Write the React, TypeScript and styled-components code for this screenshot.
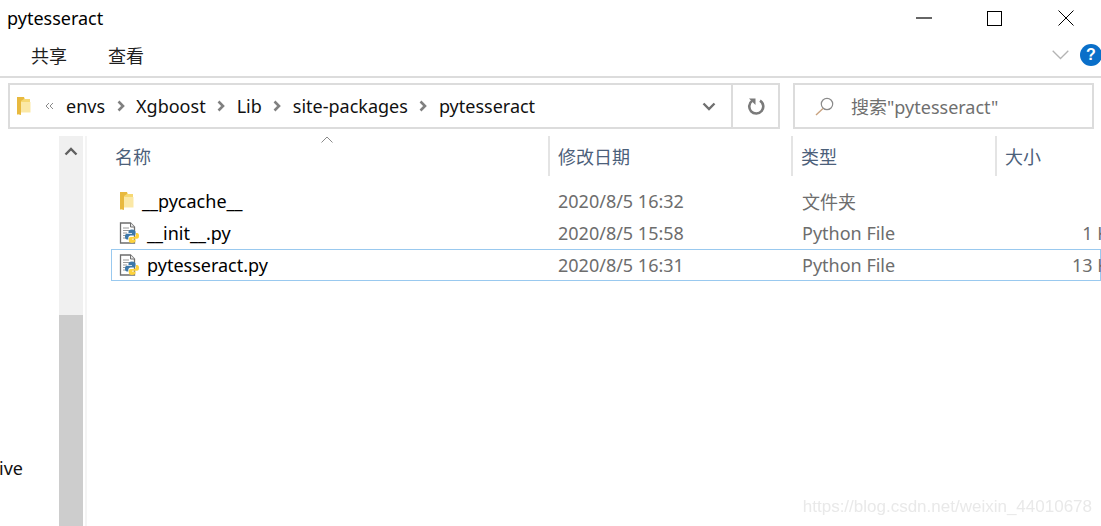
import React from 'react';
import styled, { createGlobalStyle } from 'styled-components';

const GlobalStyle = createGlobalStyle`
  html, body {
    margin: 0;
    height: 100%;
    background: #fff;
    overflow: hidden;
  }
  #root {
    height: 100%;
  }
`;

const UI_FONT = `"Noto Sans", "Noto Sans CJK SC", sans-serif`;

const Window = styled.div`
  position: relative;
  width: 1101px;
  height: 526px;
  display: flex;
  flex-direction: column;
  overflow: hidden;
  background: #fff;
  font-family: ${UI_FONT};
  font-size: 18px;
  color: #000;
`;

const TitleBar = styled.div`
  height: 36px;
  flex: none;
  display: flex;
  align-items: center;
  justify-content: space-between;
  padding-left: 7px;
`;

const Title = styled.div`
  font-size: 18px;
  line-height: 36px;
`;

const WindowButtons = styled.div`
  display: flex;
  align-items: center;
`;

const WindowButton = styled.div`
  width: 71px;
  height: 36px;
  display: flex;
  align-items: center;
  justify-content: center;
`;

const Ribbon = styled.div`
  height: 42px;
  flex: none;
  box-sizing: border-box;
  display: flex;
  align-items: center;
  justify-content: space-between;
  border-bottom: 2px solid #dcdcdc;
  padding: 0 0 2px 31px;
`;

const Tabs = styled.div`
  display: flex;
  gap: 41px;
`;

const Tab = styled.div`
  font-size: 18px;
  color: #1f1f1f;
`;

const RibbonRight = styled.div`
  display: flex;
  align-items: center;
  gap: 11px;
  margin-right: -1px;
`;

const HelpBadge = styled.div`
  width: 22px;
  height: 22px;
  border-radius: 50%;
  background: #0a6fc9;
  color: #fff;
  font-family: "Liberation Sans", sans-serif;
  font-weight: bold;
  font-size: 16px;
  line-height: 22px;
  text-align: center;
`;

const NavRow = styled.div`
  flex: none;
  display: flex;
  gap: 13px;
  padding: 5px 7px 0 8px;
`;

const AddressBar = styled.div`
  width: 772px;
  height: 46px;
  box-sizing: border-box;
  flex: none;
  display: flex;
  align-items: center;
  border: 2px solid #dcdcdc;
  padding-left: 6px;
`;

const Crumbs = styled.div`
  flex: 1;
  display: flex;
  align-items: center;
`;

const Crumb = styled.span`
  font-size: 18px;
  color: #111;
`;

const CrumbSep = styled.span`
  width: 31px;
  display: flex;
  justify-content: center;
`;

const AddressControl = styled.div<{ $w: number; $divider?: boolean }>`
  width: ${(p) => p.$w}px;
  align-self: stretch;
  display: flex;
  align-items: center;
  justify-content: center;
  ${(p) => (p.$divider ? 'border-left: 2px solid #dcdcdc;' : '')}
`;

const SearchBox = styled.div`
  flex: 1;
  height: 46px;
  box-sizing: border-box;
  display: flex;
  align-items: center;
  gap: 17px;
  border: 2px solid #dcdcdc;
  padding-left: 20px;
  font-size: 18px;
  color: #6f6f6f;
`;

const Body = styled.div`
  flex: 1;
  min-height: 0;
  display: flex;
  padding-top: 7px;
`;

const NavPane = styled.div`
  width: 59px;
  flex: none;
  display: flex;
  flex-direction: column;
  justify-content: flex-end;
  padding-bottom: 46px;
  font-size: 18px;
  line-height: 24px;
  overflow: hidden;
`;

const NavLabel = styled.div`
  margin-left: -1px;
  color: #111;
`;

const ScrollBar = styled.div`
  width: 24px;
  flex: none;
  display: flex;
  flex-direction: column;
  background: #f0f0f0;
`;

const ScrollArrow = styled.div`
  height: 30px;
  display: flex;
  align-items: center;
  justify-content: center;
`;

const ScrollTrack = styled.div`
  height: 149px;
  flex: none;
`;

const ScrollThumb = styled.div`
  flex: 1;
  background: #cdcdcd;
`;

const PaneSplit = styled.div`
  width: 2px;
  flex: none;
  margin-left: 2px;
  background: #f4f4f4;
`;

const FileList = styled.div`
  flex: 1;
  min-width: 0;
  position: relative;
  padding-left: 24px;
`;

const SortCaret = styled.div`
  position: absolute;
  left: 234px;
  top: 0;
  line-height: 0;
`;

const ColumnRow = styled.div`
  display: grid;
  grid-template-columns: 437px 243px 204px 1fr;
  height: 40px;
  margin-bottom: 9px;
`;

const ColumnHead = styled.div<{ $line?: boolean }>`
  display: flex;
  align-items: center;
  box-sizing: border-box;
  padding-left: ${(p) => (p.$line ? '8px' : '4px')};
  ${(p) => (p.$line ? 'border-left: 2px solid #e4e4e4;' : '')}
  font-size: 18px;
  color: #4c607a;
`;

const Row = styled.div<{ $selected?: boolean }>`
  display: grid;
  grid-template-columns: 437px 243px 204px 1fr;
  height: 32px;
  box-sizing: border-box;
  align-items: center;
  border: 1px solid ${(p) => (p.$selected ? '#99c9ef' : 'transparent')};
  white-space: nowrap;
`;

const NameCell = styled.div`
  display: flex;
  align-items: center;
  gap: 8px;
  padding-left: 7px;
  color: #000;
`;

const DateCell = styled.div`
  padding-left: 9px;
  color: #6d6d6d;
`;

const TypeCell = styled.div`
  padding-left: 10px;
  color: #6d6d6d;
`;

const SizeCell = styled.div`
  color: #6d6d6d;
  text-align: right;
  overflow: hidden;
  direction: ltr;
  padding-left: 60px;
  margin-right: -20px;
`;

const Watermark = styled.div`
  position: absolute;
  right: 9px;
  bottom: 9px;
  font-family: "Liberation Sans", Arial, sans-serif;
  font-size: 17px;
  line-height: 20px;
  color: #e9e9e9;
  filter: blur(0.3px);
`;

const FolderIcon = ({ size = 20 }: { size?: number }) => (
  <svg width={size * 0.75} height={size} viewBox="0 0 15 20">
    <path d="M1 1h7l1 2h5v13H5l-4 3z" fill="#f6d873" />
    <path d="M1 1h7v2L5 5v14l-4-1z" fill="#e8b93f" />
    <path d="M5 6h9.5v10.500H5z" fill="#fbe8a6" />
  </svg>
);

const PythonFileIcon = () => (
  <svg width="20" height="22" viewBox="0 0 20 22">
    <path d="M1.500 1h10l4 4v16h-14z" fill="#fff" stroke="#6e6e6e" strokeWidth="1.300" />
    <path d="M11.500 1v4h4" fill="#e9e9e9" stroke="#6e6e6e" />
    <path d="M4 6h6M4 8.500h9M4 11h4M4 13.500h4M4 16h4" stroke="#9a9a9a" />
    <path d="M13 7.500c-2.500 0-3.500 1-3.500 2.300v1.200h3.500v.7H8c-1.500 0-2 1.300-2 3 0 1.600.7 2.800 2 2.800h1.300v-1.700c0-1.300 1-2.300 2.300-2.300h3.100c1 0 1.800-.8 1.800-1.800V9.800c0-1.300-1.300-2.300-3.500-2.300z" fill="#3c78aa" />
    <path d="M13 21c2.500 0 3.500-1 3.500-2.300v-1.200H13v-.7h5c1.500 0 2-1.300 2-3 0-1.600-.7-2.800-2-2.800h-1v1.700c0 1.300-1 2.300-2.300 2.300h-3.100c-1 0-1.800.8-1.800 1.800v1.900c0 1.300 1.200 2.300 3.200 2.300z" fill="#fdd23c" />
  </svg>
);

const CrumbArrow = () => (
  <svg width="8" height="12" viewBox="0 0 8 12">
    <path d="M1.500 1.500 6 6l-4.500 4.500" fill="none" stroke="#808080" strokeWidth="2.600" />
  </svg>
);

const crumbs = ['envs', 'Xgboost', 'Lib', 'site-packages', 'pytesseract'];

const files = [
  { name: '__pycache__', date: '2020/8/5 16:32', type: '文件夹', size: '', folder: true },
  { name: '__init__.py', date: '2020/8/5 15:58', type: 'Python File', size: '1 KB' },
  { name: 'pytesseract.py', date: '2020/8/5 16:31', type: 'Python File', size: '13 KB', selected: true },
];

export default function App() {
  return (
    <Window>
      <GlobalStyle />
      <TitleBar>
        <Title>pytesseract</Title>
        <WindowButtons>
          <WindowButton>
            <svg width="16" height="2" viewBox="0 0 16 2"><path d="M0 1h16" stroke="#000" strokeWidth="1.200" /></svg>
          </WindowButton>
          <WindowButton>
            <svg width="15" height="15" viewBox="0 0 15 15"><rect x=".5" y=".5" width="14" height="14" fill="none" stroke="#000" /></svg>
          </WindowButton>
          <WindowButton>
            <svg width="16" height="16" viewBox="0 0 16 16"><path d="M.5.5l15 15M15.500.5l-15 15" stroke="#000" /></svg>
          </WindowButton>
        </WindowButtons>
      </TitleBar>
      <Ribbon>
        <Tabs>
          <Tab>共享</Tab>
          <Tab>查看</Tab>
        </Tabs>
        <RibbonRight>
          <svg width="17" height="10" viewBox="0 0 17 10"><path d="M.7.7 8.500 8.500 16.300.7" fill="none" stroke="#b4b4b4" strokeWidth="1.300" /></svg>
          <HelpBadge>?</HelpBadge>
        </RibbonRight>
      </Ribbon>
      <NavRow>
        <AddressBar>
          <FolderIcon size={20} />
          <Crumbs>
            <svg width="9" height="8" viewBox="0 0 9 8" style={{ margin: '0 12px 0 14px' }}>
              <path d="M4 1 1 4l3 3M8 1 5 4l3 3" fill="none" stroke="#8a8a8a" />
            </svg>
            {crumbs.map((c, i) => (
              <React.Fragment key={c}>
                {i > 0 && <CrumbSep><CrumbArrow /></CrumbSep>}
                <Crumb>{c}</Crumb>
              </React.Fragment>
            ))}
          </Crumbs>
          <AddressControl $w={44}>
            <svg width="14" height="9" viewBox="0 0 14 9"><path d="M1.500 1.500 7 7l5.500-5.500" fill="none" stroke="#707070" strokeWidth="2.400" /></svg>
          </AddressControl>
          <AddressControl $w={45} $divider>
            <svg width="18" height="18" viewBox="0 0 18 18">
              <path d="M5.200 3.800A7 7 0 1 0 13 3.600" fill="none" stroke="#7a7a7a" strokeWidth="2.600" />
              <path d="M2 1.500h6.500V8z" fill="#7a7a7a" />
            </svg>
          </AddressControl>
        </AddressBar>
        <SearchBox>
          <svg width="19" height="19" viewBox="0 0 19 19">
            <circle cx="12" cy="7" r="5.700" fill="none" stroke="#8a8a8a" strokeWidth="1.200" />
            <path d="M8 11.500 1 18" stroke="#c9a27f" strokeWidth="1.400" />
          </svg>
          <span>搜索"pytesseract"</span>
        </SearchBox>
      </NavRow>
      <Body>
        <NavPane>
          <NavLabel>ive</NavLabel>
        </NavPane>
        <ScrollBar>
          <ScrollArrow>
            <svg width="14" height="9" viewBox="0 0 14 9"><path d="M1.500 7.500 7 2l5.500 5.500" fill="none" stroke="#606060" strokeWidth="2.400" /></svg>
          </ScrollArrow>
          <ScrollTrack />
          <ScrollThumb />
        </ScrollBar>
        <PaneSplit />
        <FileList>
          <SortCaret>
            <svg width="12" height="7" viewBox="0 0 12 7"><path d="M.5 6.500 6 1l5.500 5.500" fill="none" stroke="#8a8a8a" /></svg>
          </SortCaret>
          <ColumnRow>
            <ColumnHead>名称</ColumnHead>
            <ColumnHead $line>修改日期</ColumnHead>
            <ColumnHead $line>类型</ColumnHead>
            <ColumnHead $line>大小</ColumnHead>
          </ColumnRow>
          {files.map((f) => (
            <Row key={f.name} $selected={f.selected}>
              <NameCell>
                {f.folder ? <FolderIcon size={20} /> : <PythonFileIcon />}
                {f.name}
              </NameCell>
              <DateCell>{f.date}</DateCell>
              <TypeCell>{f.type}</TypeCell>
              <SizeCell>{f.size}</SizeCell>
            </Row>
          ))}
        </FileList>
      </Body>
      <Watermark>https://blog.csdn.net/weixin_44010678</Watermark>
    </Window>
  );
}
